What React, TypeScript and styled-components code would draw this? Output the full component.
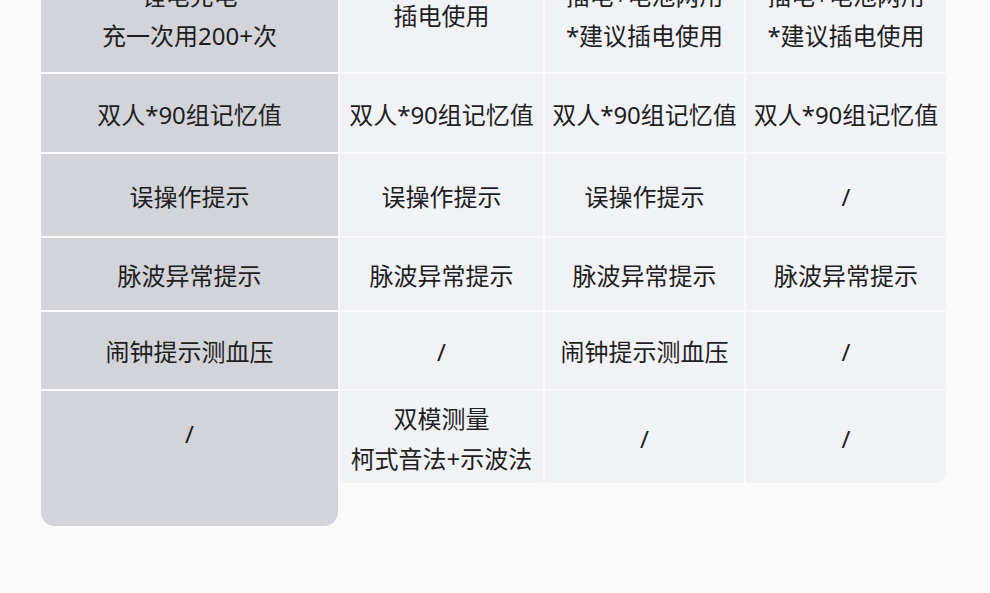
import * as React from "react";
import styled, { createGlobalStyle } from "styled-components";

const GlobalStyle = createGlobalStyle`
  html, body {
    margin: 0;
    padding: 0;
    background: #fafafb;
    overflow: hidden;
  }
  body {
    font-family: "Noto Sans", "Noto Sans CJK SC", sans-serif;
  }
`;

const Page = styled.div`
  width: 990px;
  height: 593px;
  overflow: hidden;
  padding-left: 41px;
  box-sizing: border-box;
`;

const Table = styled.div`
  display: grid;
  grid-template-columns: 297px 203px 199px 200px;
  grid-template-rows: 116px 78px 82px 72px 77px 92px 41px;
  gap: 2px;
  margin-top: -44px;
`;

const Cell = styled.div<{ $label?: boolean; $tall?: boolean; $corner?: boolean }>`
  display: flex;
  flex-direction: column;
  align-items: center;
  justify-content: ${(p) => (p.$tall ? "flex-start" : "center")};
  padding-top: ${(p) => (p.$tall ? "23px" : "3px")};
  box-sizing: border-box;
  background: ${(p) => (p.$label ? "#d3d4d9" : "#f1f2f6")};
  grid-row: ${(p) => (p.$tall ? "span 2" : "auto")};
  border-radius: ${(p) =>
    p.$tall ? "0 0 14px 14px" : p.$corner ? "0 0 10px 0" : "0"};
  color: #1e1e1e;
  font-size: 24px;
  line-height: 40px;
  text-align: center;
  white-space: nowrap;
`;

const rows: string[][][] = [
  [["锂电充电", "充一次用200+次"], ["插电使用"], ["插电+电池两用", "*建议插电使用"], ["插电+电池两用", "*建议插电使用"]],
  [["双人*90组记忆值"], ["双人*90组记忆值"], ["双人*90组记忆值"], ["双人*90组记忆值"]],
  [["误操作提示"], ["误操作提示"], ["误操作提示"], ["/"]],
  [["脉波异常提示"], ["脉波异常提示"], ["脉波异常提示"], ["脉波异常提示"]],
  [["闹钟提示测血压"], ["/"], ["闹钟提示测血压"], ["/"]],
  [["/"], ["双模测量", "柯式音法+示波法"], ["/"], ["/"]],
];

export default function App() {
  return (
    <Page>
      <GlobalStyle />
      <Table>
        {rows.map((row, r) =>
          row.map((lines, c) => {
            const last = r === rows.length - 1;
            return (
              <Cell
                key={`${r}-${c}`}
                $label={c === 0}
                $tall={last && c === 0}
                $corner={last && c === 3}
              >
                {lines.map((l) => (
                  <span key={l}>{l}</span>
                ))}
              </Cell>
            );
          })
        )}
      </Table>
    </Page>
  );
}
